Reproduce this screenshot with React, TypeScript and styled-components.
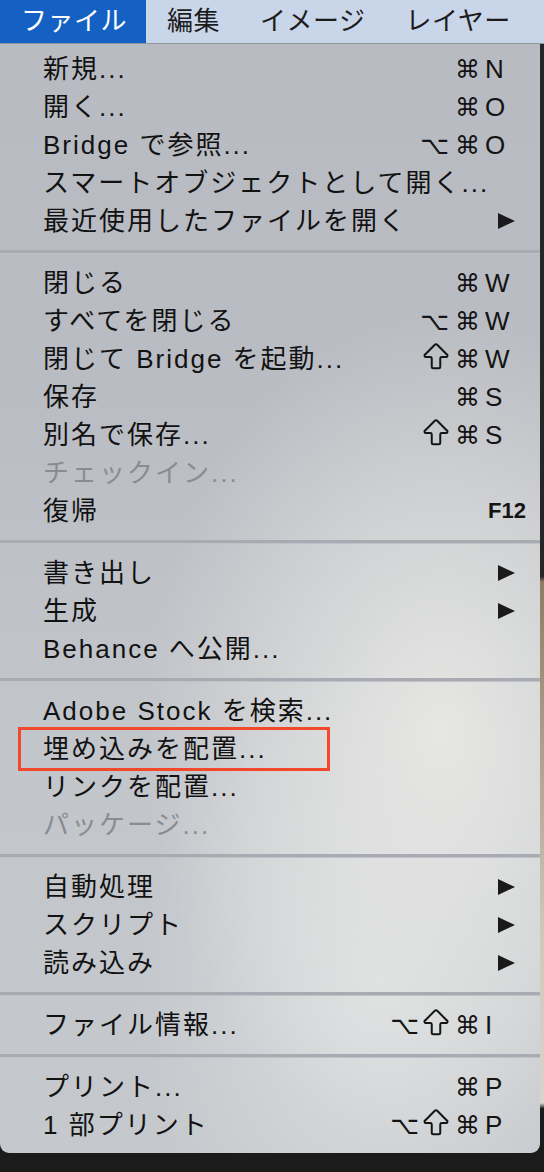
import styled, { createGlobalStyle, css } from 'styled-components';
import { ArrowBigUp } from 'lucide-react';

const GlobalStyle = createGlobalStyle`
  html, body {
    margin: 0;
    padding: 0;
    background: #1b1b1b;
  }
  body {
    font-family: "Liberation Sans", "Noto Sans CJK JP", sans-serif;
  }
`;

const Screen = styled.div`
  width: 544px;
  height: 1172px;
  overflow: hidden;
  background: #1b1b1b;
`;

const MenuBar = styled.div`
  display: flex;
  height: 43px;
  background: #c9d5e8;
  border-bottom: 1px solid #8f959c;
`;

const BarItem = styled.div<{ $active?: boolean }>`
  padding: 0 19px 0 21px;
  line-height: 43px;
  font-size: 26px;
  letter-spacing: 0.5px;
  white-space: nowrap;
  color: ${({ $active }) => ($active ? '#ffffff' : '#1c1c1c')};
  background: ${({ $active }) => ($active ? '#1461c3' : 'transparent')};
`;

const Body = styled.div`
  display: flex;
  align-items: stretch;
`;

const Menu = styled.div`
  width: 540px;
  padding: 6px 0 9px;
  border-radius: 0 0 9px 9px;
  background:
    radial-gradient(ellipse 55% 38% at 82% 62%, rgba(232, 232, 229, 0.95), rgba(232, 232, 229, 0) 100%),
    radial-gradient(ellipse 45% 30% at 70% 85%, rgba(226, 228, 229, 0.8), rgba(226, 228, 229, 0) 100%),
    linear-gradient(180deg, #b8bbc1 0%, #b9bcc2 30%, #c2c5ca 60%, #c5c8cc 100%);
`;

const EdgeStrip = styled.div`
  width: 4px;
  background: linear-gradient(
    180deg,
    #262626 0%,
    #262626 48%,
    #8e7c64 48.5%,
    #cfc7bb 80%,
    #d9d4cc 95.5%,
    #1b1b1b 96%
  );
`;

const Separator = styled.div`
  height: 3px;
  margin: 10px 0;
  background: #a8acb2;
  border-bottom: 1px solid rgba(255, 255, 255, 0.25);
`;

const Row = styled.div<{ $disabled?: boolean; $marked?: boolean }>`
  position: relative;
  display: grid;
  grid-template-columns: 1fr auto 41px;
  align-items: center;
  height: 38px;
  padding: 0 15px 0 43px;
  font-size: 26px;
  letter-spacing: 2px;
  color: ${({ $disabled }) => ($disabled ? '#8a8c91' : '#121212')};

  ${({ $marked }) =>
    $marked &&
    css`
      &::after {
        content: '';
        position: absolute;
        left: 18px;
        top: -3px;
        width: 312px;
        height: 44px;
        box-sizing: border-box;
        border: 3px solid #f2492d;
      }
    `}
`;

const Label = styled.span`
  white-space: nowrap;
  line-height: 38px;
`;

const Mods = styled.span`
  display: flex;
  align-items: center;
  gap: 6px;
  margin-right: 4px;
  font-family: "DejaVu Sans", sans-serif;
  font-size: 25px;
  letter-spacing: 0;
  color: #141414;
`;

const ShiftIcon = styled(ArrowBigUp)`
  width: 34px;
  height: 34px;
  margin: -4px -4px 0 -6px;
`;

const KeyCell = styled.span`
  display: flex;
  align-items: center;
`;

const Key = styled.span<{ $fn?: boolean }>`
  letter-spacing: 0;
  color: #141414;
  font-size: ${({ $fn }) => ($fn ? '22px' : '26px')};
  font-weight: ${({ $fn }) => ($fn ? 700 : 400)};
  padding-left: ${({ $fn }) => ($fn ? '4px' : '1px')};
`;

const Arrow = styled.span`
  display: block;
  width: 0;
  height: 0;
  margin-left: 14px;
  border-top: 8px solid transparent;
  border-bottom: 8px solid transparent;
  border-left: 17px solid #1a1a1a;
`;

type Item = {
  label: string;
  mods?: string;
  key?: string;
  fn?: boolean;
  submenu?: boolean;
  disabled?: boolean;
  marked?: boolean;
};

const sections: Item[][] = [
  [
    { label: '新規...', mods: '⌘', key: 'N' },
    { label: '開く...', mods: '⌘', key: 'O' },
    { label: 'Bridge で参照...', mods: '⌥⌘', key: 'O' },
    { label: 'スマートオブジェクトとして開く...' },
    { label: '最近使用したファイルを開く', submenu: true },
  ],
  [
    { label: '閉じる', mods: '⌘', key: 'W' },
    { label: 'すべてを閉じる', mods: '⌥⌘', key: 'W' },
    { label: '閉じて Bridge を起動...', mods: '⇧⌘', key: 'W' },
    { label: '保存', mods: '⌘', key: 'S' },
    { label: '別名で保存...', mods: '⇧⌘', key: 'S' },
    { label: 'チェックイン...', disabled: true },
    { label: '復帰', key: 'F12', fn: true },
  ],
  [
    { label: '書き出し', submenu: true },
    { label: '生成', submenu: true },
    { label: 'Behance へ公開...' },
  ],
  [
    { label: 'Adobe Stock を検索...' },
    { label: '埋め込みを配置...', marked: true },
    { label: 'リンクを配置...' },
    { label: 'パッケージ...', disabled: true },
  ],
  [
    { label: '自動処理', submenu: true },
    { label: 'スクリプト', submenu: true },
    { label: '読み込み', submenu: true },
  ],
  [{ label: 'ファイル情報...', mods: '⌥⇧⌘', key: 'I' }],
  [
    { label: 'プリント...', mods: '⌘', key: 'P' },
    { label: '1 部プリント', mods: '⌥⇧⌘', key: 'P' },
  ],
];

const barItems = ['ファイル', '編集', 'イメージ', 'レイヤー'];

const MenuRow = ({ item }: { item: Item }) => (
  <Row $disabled={item.disabled} $marked={item.marked}>
    <Label>{item.label}</Label>
    <Mods>
      {(item.mods ?? '').split('').map((m, i) =>
        m === '⇧' ? (
          <ShiftIcon key={i} strokeWidth={1.4} aria-label="⇧" />
        ) : (
          <span key={i}>{m}</span>
        ),
      )}
    </Mods>
    <KeyCell>
      {item.submenu ? <Arrow /> : item.key && <Key $fn={item.fn}>{item.key}</Key>}
    </KeyCell>
  </Row>
);

export default function App() {
  return (
    <Screen>
      <GlobalStyle />
      <MenuBar>
        {barItems.map((name, i) => (
          <BarItem key={name} $active={i === 0}>
            {name}
          </BarItem>
        ))}
      </MenuBar>
      <Body>
        <Menu>
          {sections.map((items, s) => (
            <div key={s}>
              {s > 0 && <Separator />}
              {items.map(item => (
                <MenuRow key={item.label} item={item} />
              ))}
            </div>
          ))}
        </Menu>
        <EdgeStrip />
      </Body>
    </Screen>
  );
}
